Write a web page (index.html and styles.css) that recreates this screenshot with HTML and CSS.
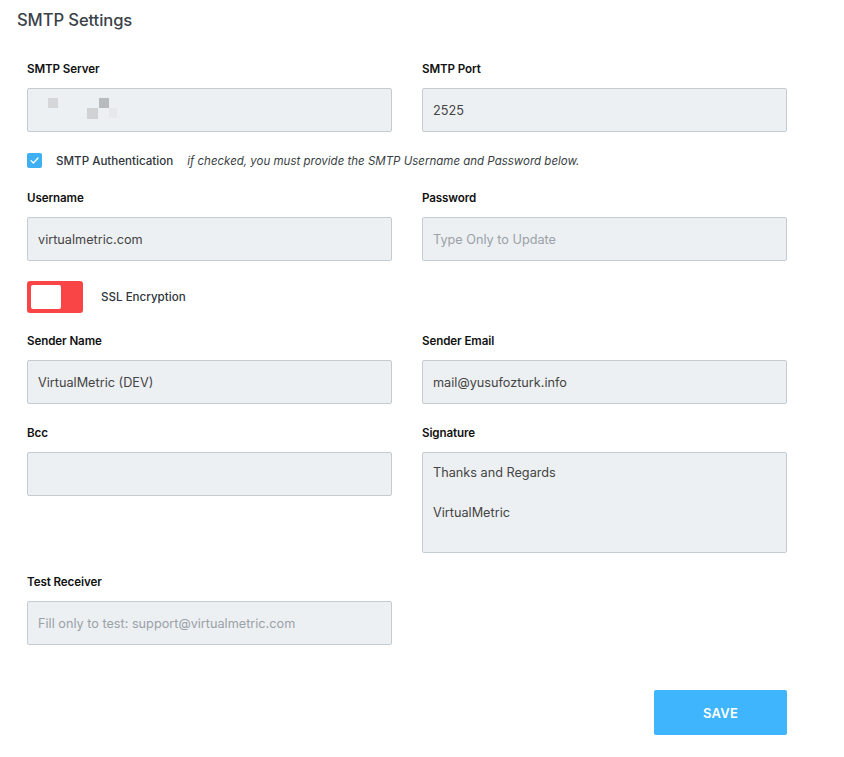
FILE: index.html
```html
<!DOCTYPE html>
<html>
<head>
<meta charset="utf-8">
<link rel="stylesheet" href="styles.css">
</head>
<body>
<div class="page">
  <h1 class="title">SMTP Settings</h1>
  <form class="form">
    <div class="grid">
      <div class="field">
        <label class="label">SMTP Server</label>
        <div class="input blurred">
          <span class="px p1"></span><span class="px p2"></span><span class="px p3"></span><span class="px p4"></span><span class="px p5"></span>
        </div>
      </div>
      <div class="field">
        <label class="label">SMTP Port</label>
        <div class="input">2525</div>
      </div>
    </div>

    <div class="check-row">
      <span class="checkbox"><svg width="15" height="15" viewBox="0 0 15 15"><path d="M4 7.6 L6.4 10 L11 5" fill="none" stroke="#fff" stroke-width="1.3" stroke-linecap="round" stroke-linejoin="round"/></svg></span>
      <span class="check-label">SMTP Authentication</span>
      <span class="check-hint">if checked, you must provide the SMTP Username and Password below.</span>
    </div>

    <div class="grid">
      <div class="field">
        <label class="label">Username</label>
        <div class="input">virtualmetric.com</div>
      </div>
      <div class="field">
        <label class="label">Password</label>
        <div class="input placeholder">Type Only to Update</div>
      </div>
    </div>

    <div class="toggle-row">
      <span class="toggle"><span class="knob"></span></span>
      <span class="toggle-label">SSL Encryption</span>
    </div>

    <div class="grid">
      <div class="field">
        <label class="label">Sender Name</label>
        <div class="input">VirtualMetric (DEV)</div>
      </div>
      <div class="field">
        <label class="label">Sender Email</label>
        <div class="input">mail@yusufozturk.info</div>
      </div>
    </div>

    <div class="grid gap-row">
      <div class="field">
        <label class="label">Bcc</label>
        <div class="input"></div>
      </div>
      <div class="field">
        <label class="label">Signature</label>
        <div class="input textarea">Thanks and Regards<br><br>VirtualMetric</div>
      </div>
    </div>

    <div class="grid gap-row">
      <div class="field">
        <label class="label">Test Receiver</label>
        <div class="input placeholder">Fill only to test: support@virtualmetric.com</div>
      </div>
      <div></div>
    </div>

    <div class="actions">
      <button type="button" class="save">SAVE</button>
    </div>
  </form>
</div>
</body>
</html>
```
FILE: styles.css
```css
* { box-sizing: border-box; }
html, body { margin: 0; padding: 0; background: #fff; }
body { font-family: Inter, "Noto Sans", sans-serif; color: #333; }
.page { width: 844px; height: 757px; }
.title {
  margin: 0;
  padding: 10px 0 0 17px;
  font-size: 16.6px;
  line-height: 21px;
  font-weight: 500;
  color: #3a4249;
  letter-spacing: -0.1px;
}
.form { padding: 31px 0 0 27px; width: 787px; }
.grid {
  display: grid;
  grid-template-columns: 365px 365px;
  column-gap: 30px;
}
.gap-row { margin-top: 22px; }
.field { display: flex; flex-direction: column; }
.label {
  font-size: 11.6px;
  line-height: 14px;
  font-weight: 600;
  color: #111;
  margin-bottom: 12px;
  letter-spacing: -0.1px;
}
.input {
  height: 44px;
  background: #edf0f3;
  border: 1px solid #c4ccd2;
  border-radius: 2px;
  padding: 0 10px;
  font-size: 12.7px;
  line-height: 43px;
  color: #444;
}
.input.placeholder { color: #9aa1a7; }
.input.textarea {
  height: 101px;
  line-height: 20px;
  padding-top: 10px;
}
.blurred { position: relative; }
.px { position: absolute; display: block; }
.p1 { left: 20px; top: 9px; width: 10px; height: 10px; background: #d4d6d8; }
.p2 { left: 40px; top: 9px; width: 0; }
.p3 { left: 71px; top: 9px; width: 10px; height: 10px; background: #b8bbbd; }
.p4 { left: 59px; top: 19px; width: 11px; height: 11px; background: #cfd1d3; }
.p5 { left: 81px; top: 19px; width: 8px; height: 10px; background: #e6e8ea; }
.check-row {
  display: flex;
  align-items: center;
  height: 15px;
  margin: 21px 0 23px;
}
.checkbox {
  width: 15px;
  height: 15px;
  background: #3eb0f2;
  border-radius: 2px;
  display: flex;
}
.check-label {
  margin-left: 14px;
  font-size: 11.6px;
  font-weight: 500;
  color: #2e353b;
}
.check-hint {
  margin-left: 14px;
  font-size: 11.5px;
  font-style: italic;
  color: #3a3f44;
}
.toggle-row {
  display: flex;
  align-items: center;
  margin: 20px 0 21px;
}
.toggle {
  width: 56px;
  height: 32px;
  background: #f94545;
  border-radius: 3px;
  padding: 4px;
  display: flex;
}
.knob {
  width: 30px;
  height: 24px;
  background: #fff;
  border-radius: 2px;
}
.toggle-label {
  margin-left: 18px;
  font-size: 11.6px;
  font-weight: 500;
  color: #2e353b;
}
.actions {
  display: flex;
  justify-content: flex-end;
  margin-top: 45px;
}
.save {
  width: 133px;
  height: 45px;
  border: none;
  border-radius: 2px;
  background: #3fb5fe;
  color: #fff;
  font-family: Inter, "Noto Sans", sans-serif;
  font-size: 13px;
  font-weight: 600;
  letter-spacing: 0.2px;
}
```
